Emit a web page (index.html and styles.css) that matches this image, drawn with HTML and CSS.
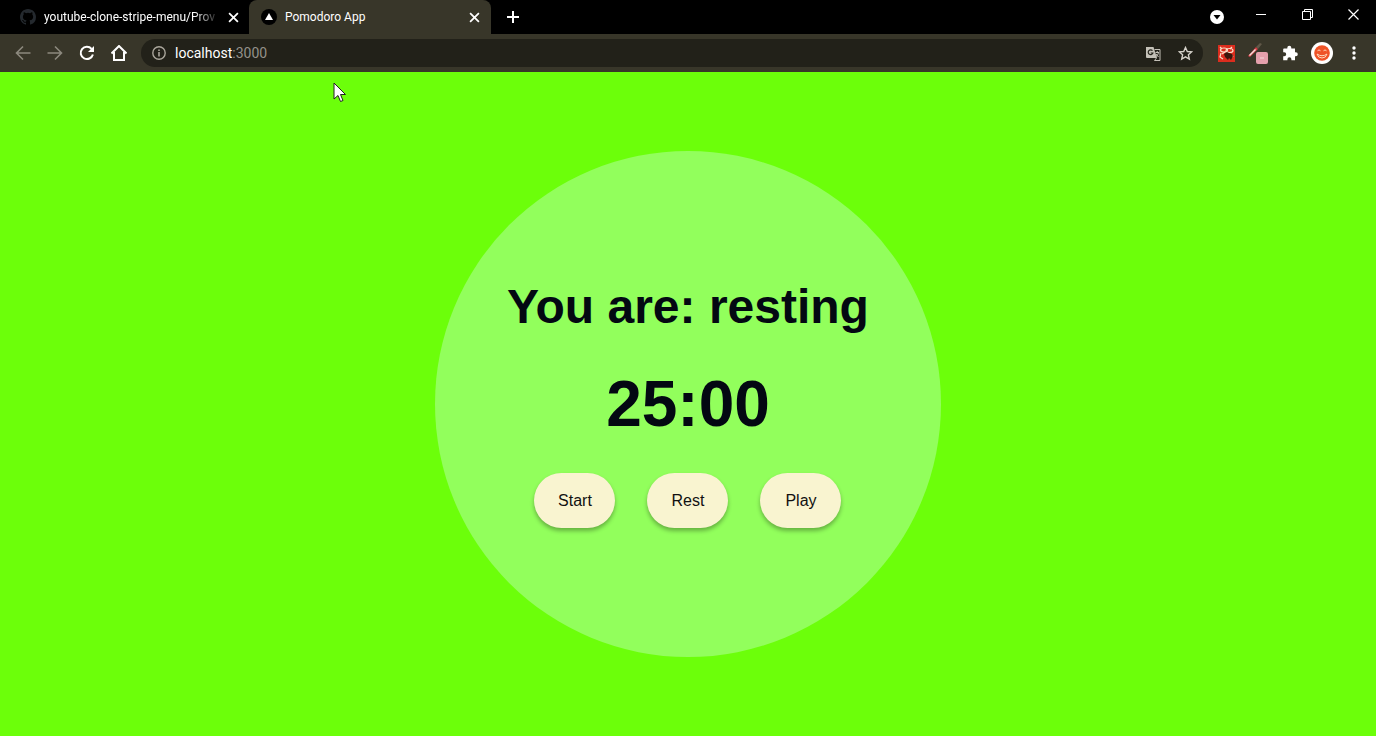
FILE: index.html
```html
<!DOCTYPE html>
<html lang="en">
<head>
<meta charset="utf-8">
<title>Pomodoro App</title>
<link rel="stylesheet" href="styles.css">
</head>
<body>
<header class="browser">
  <div class="tabs">
    <div class="tab">
      <svg class="favicon" viewBox="0 0 16 16"><path fill="#24292e" d="M8 0C3.58 0 0 3.58 0 8c0 3.54 2.29 6.53 5.47 7.59.4.07.55-.17.55-.38v-1.49c-2.01.37-2.53-.49-2.69-.94-.09-.23-.48-.94-.82-1.13-.28-.15-.68-.52-.01-.53.63-.01 1.08.58 1.23.82.72 1.21 1.87.87 2.33.66.07-.52.28-.87.51-1.07-1.78-.2-3.64-.89-3.64-3.95 0-.87.31-1.59.82-2.15-.08-.2-.36-1.02.08-2.12 0 0 .67-.21 2.2.82a7.6 7.6 0 0 1 4 0c1.53-1.04 2.2-.82 2.2-.82.44 1.1.16 1.92.08 2.12.51.56.82 1.27.82 2.15 0 3.07-1.87 3.75-3.65 3.95.29.25.54.73.54 1.48v2.2c0 .21.15.46.55.38A8 8 0 0 0 16 8c0-4.42-3.58-8-8-8z"/></svg>
      <span class="tab-title fade">youtube-clone-stripe-menu/Prov</span>
      <button class="icon-button" aria-label="Close tab"><svg class="cross" viewBox="0 0 10 10"><path d="M1 1l8 8M9 1L1 9"/></svg></button>
    </div>
    <div class="tab active">
      <svg class="favicon" viewBox="0 0 16 16"><circle cx="8" cy="8" r="8" fill="#000"/><path d="M8 4l4 7H4z" fill="#fff"/></svg>
      <span class="tab-title">Pomodoro App</span>
      <button class="icon-button" aria-label="Close tab"><svg class="cross" viewBox="0 0 10 10"><path d="M1 1l8 8M9 1L1 9"/></svg></button>
    </div>
    <button class="icon-button new-tab" aria-label="New tab"><svg class="plus" viewBox="0 0 12 12"><path d="M6 0v12M0 6h12"/></svg></button>
    <div class="window-controls">
      <button class="icon-button" aria-label="Search tabs"><svg width="14" height="14" viewBox="0 0 14 14"><circle cx="7" cy="7" r="7" fill="#fff"/><path d="M3.500 5h7L7 9.500z" fill="#000"/></svg></button>
      <button class="icon-button window-button" aria-label="Minimize"><svg width="10" height="10" viewBox="0 0 10 10"><path d="M0 5.500h10" stroke="#fff"/></svg></button>
      <button class="icon-button window-button" aria-label="Restore"><svg width="11" height="11" viewBox="0 0 11 11"><path d="M.5 2.500h8v8h-8zM2.500 2.500v-2h8v8h-2" stroke="#fff" fill="none"/></svg></button>
      <button class="icon-button window-button" aria-label="Close"><svg width="11" height="11" viewBox="0 0 11 11"><path d="M.5.5l10 10M10.500.5l-10 10" stroke="#fff" stroke-width="1.200"/></svg></button>
    </div>
  </div>
  <div class="toolbar">
    <button class="icon-button tool dim" aria-label="Back"><svg class="line" viewBox="0 0 16 16"><path d="M15.500 8H1.500M8 1.500L1.500 8 8 14.500"/></svg></button>
    <button class="icon-button tool dim" aria-label="Forward"><svg class="line" viewBox="0 0 16 16"><path d="M.5 8h14M8 1.500L14.500 8 8 14.500"/></svg></button>
    <button class="icon-button tool" aria-label="Reload"><svg class="line" viewBox="0 0 16 16"><path stroke-width="2" d="M13.900 9.500A6.200 6.200 0 1 1 12.600 3.800"/><path d="M15 1v6H9z" fill="#fff" stroke="none"/></svg></button>
    <button class="icon-button tool" aria-label="Home"><svg class="line" viewBox="0 0 16 16"><path stroke-width="2" d="M.5 8.500L8 1l7.500 7.500M3 7v8h10V7"/></svg></button>
    <div class="address">
      <svg class="info" viewBox="0 0 14 14"><circle cx="7" cy="7" r="6.200" fill="none" stroke="#aaa69c" stroke-width="1.400"/><path d="M7 6v4.500M7 3.500V5" stroke="#aaa69c" stroke-width="1.600"/></svg>
      <span class="url">localhost<span class="port">:3000</span></span>
      <button class="icon-button" aria-label="Translate"><svg width="15" height="15" viewBox="0 0 15 15"><path d="M0 1h7.500l3.500 11H1a1 1 0 0 1-1-1z" fill="#c4c1b8"/><path d="M8.500 3.500H14v11H8.500l2-2.500" fill="none" stroke="#c4c1b8"/><path d="M6.500 4.700a2.400 2.400 0 1 0 .4 2.300H4.700" fill="none" stroke="#25241c" stroke-width="1.200"/><path d="M9.500 6.500H13M11.200 5v1.500M12.500 6.500c-.3 2-1.300 3.200-2.500 4M10 8l2.500 3" fill="none" stroke="#c4c1b8"/></svg></button>
      <button class="icon-button" aria-label="Bookmark"><svg width="15" height="15" viewBox="0 0 15 15"><path d="M7.500 1.500l1.800 4 4.300.4-3.200 2.900.9 4.300-3.800-2.300-3.800 2.300.9-4.300L1.400 5.900l4.300-.4z" fill="none" stroke="#d5d2ca" stroke-width="1.400"/></svg></button>
    </div>
    <div class="extensions">
      <button class="icon-button ext" aria-label="Recorder extension"><svg width="17" height="17" viewBox="0 0 17 17"><path d="M0 0h17v17H0z" fill="#dc2d1e"/><g fill="none" stroke="#f8dfc8" stroke-width="1.200"><ellipse cx="6" cy="5" rx="3.500" ry="2"/><ellipse cx="11.500" cy="5.500" rx="3.500" ry="2"/><path d="M2 2l2 2M14 2l-2 2M3 8l-1 4 3 2M4 9l3-2M13 9l2 3"/></g><path d="M6 9l3-2 2 1 3 1 1 2-2 4-2-2-1 2-2-2-1-1z" fill="#3a170c"/></svg></button>
      <button class="icon-button ext" aria-label="Color picker"><svg width="24" height="24" viewBox="0 0 24 24"><path d="M2 15l8-9 2 2-8 8z" fill="#d83b43"/><path d="M3 14l6-6 1 1-6 6z" fill="#eee1dc"/><path d="M10 6l4-4 2 1-4 5z" fill="#605848"/><rect x="10" y="11" width="12" height="12" rx="2" fill="#e5a0ac"/><path d="M14 17h4" stroke="#f4d8dc"/></svg></button>
      <button class="icon-button ext" aria-label="Extensions"><svg width="16" height="16" viewBox="0 0 16 16"><path fill="#fff" d="M2 3.500h3.300V2.700a2 2 0 0 1 4 0v.8H13v3.800h.8a2 2 0 0 1 0 4H13V15.300H9.400v-1a2 2 0 0 0-4 0v1H1.200v-4h1a2 2 0 0 0 0-4h-1v-3q0-.8.8-.8z"/></svg></button>
      <button class="icon-button ext" aria-label="Profile"><svg width="22" height="22" viewBox="0 0 22 22"><circle cx="11" cy="11" r="11" fill="#fff"/><circle cx="11" cy="11" r="7.800" fill="#ef5327"/><path d="M6.500 8.800q1.500-1.800 3 0M12.500 8.800q1.500-1.800 3 0M6 12q5 3.500 10 0-1 4-5 4t-5-4z" fill="none" stroke="#ffd9bd"/></svg></button>
      <button class="icon-button ext" aria-label="Menu"><svg width="4" height="14" viewBox="0 0 4 14"><g fill="#fff"><circle cx="2" cy="2" r="1.700"/><circle cx="2" cy="7" r="1.700"/><circle cx="2" cy="12" r="1.700"/></g></svg></button>
    </div>
  </div>
</header>
<main class="page">
  <section class="timer">
    <h1 class="status">You are: resting</h1>
    <p class="clock">25:00</p>
    <div class="actions">
      <button class="action">Start</button>
      <button class="action">Rest</button>
      <button class="action">Play</button>
    </div>
  </section>
  <svg class="cursor" viewBox="0 0 13 21" aria-hidden="true"><path d="M1 1v16l4-3.500 2.500 6 2.500-1-2.500-6h5z" fill="#fff" stroke="#222"/></svg>
</main>
</body>
</html>
```
FILE: styles.css
```css
* { box-sizing: border-box; }

body {
  margin: 0;
  min-height: 100vh;
  display: flex;
  flex-direction: column;
  font-family: "Liberation Sans", Arial, sans-serif;
}

.browser {
  color: #fff;
  font-family: Roboto, "Noto Sans", sans-serif;
  background: #000;
}

.icon-button {
  display: flex;
  align-items: center;
  justify-content: center;
  padding: 0;
  border: 0;
  background: none;
  flex: none;
}

.tabs { display: flex; height: 34px; }

.tab {
  display: flex;
  align-items: center;
  width: 249px;
  padding: 0 10px 0 20px;
  gap: 8px;
  font-size: 12px;
}

.tab.active {
  width: 242px;
  padding: 0 11px 0 12px;
  background: #383629;
  border-radius: 8px 8px 0 0;
}

.favicon { width: 16px; height: 16px; flex: none; }

.tab-title {
  flex: 1;
  white-space: nowrap;
}

.fade { mask-image: linear-gradient(to right, #000 85%, transparent); }

.cross { width: 11px; height: 11px; }
.cross path { stroke: #fff; stroke-width: 1.6; fill: none; }
.plus path { stroke: #fff; stroke-width: 2; fill: none; }
.new-tab { width: 44px; }
.plus { width: 12px; height: 12px; }

.window-controls {
  display: flex;
  align-items: center;
  margin-left: auto;
}

.window-button { width: 46px; height: 28px; align-self: flex-start; }
.window-controls .icon-button:first-child { margin-right: 14px; }

.toolbar {
  display: flex;
  align-items: center;
  height: 38px;
  padding: 0 6px 0 7px;
  background: #383629;
}

.tool { width: 32px; }
.line { width: 16px; height: 16px; fill: none; stroke: #fff; stroke-width: 2; }
.dim .line { stroke: #8c897e; stroke-width: 1.6; }

.address {
  display: flex;
  align-items: center;
  flex: 1;
  height: 28px;
  margin-left: 6px;
  padding: 0 10px 0 11px;
  gap: 17px;
  border-radius: 14px;
  background: #222119;
}

.info { width: 14px; height: 14px; }
.url { flex: 1; margin-left: -8px; font-size: 14px; }
.port { color: #94918a; }

.extensions { display: flex; margin-left: 7px; }
.ext { width: 32px; }

.page {
  position: relative;
  flex: 1;
  display: flex;
  align-items: center;
  justify-content: center;
  background: #6cff0a;
}

.timer {
  display: flex;
  flex-direction: column;
  align-items: center;
  justify-content: center;
  padding: 0 72px;
  aspect-ratio: 1;
  border-radius: 50%;
  background: #92ff5c;
  color: #030812;
}

.status { margin: 0; font-size: 48px; line-height: 54px; white-space: nowrap; }
.clock { margin: 33px 0 32px; font-size: 64px; line-height: 74px; font-weight: bold; }

.actions { display: flex; gap: 32px; }

.action {
  min-width: 81px;
  padding: 18px 23px;
  border: 0;
  border-radius: 28px;
  font: 16px/19px "Liberation Sans", Arial, sans-serif;
  color: #111;
  background: #f9f4d0;
  box-shadow: 0 3px 4px rgba(0, 0, 0, 0.3);
}

.cursor {
  position: absolute;
  left: 333px;
  top: 10px;
  width: 13px;
  height: 21px;
}
```
